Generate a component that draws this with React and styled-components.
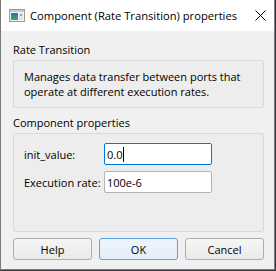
import React from 'react';
import styled, { createGlobalStyle } from 'styled-components';

const GlobalStyle = createGlobalStyle`
  html, body {
    margin: 0;
    padding: 0;
    background: #3b3a45;
  }
  body {
    font-family: "Open Sans", "Noto Sans", sans-serif;
    font-size: 11px;
    color: #000;
  }
`;

const Window = styled.div`
  width: 275px;
  height: 270px;
  box-sizing: border-box;
  display: flex;
  flex-direction: column;
  background: #f0f0f0;
  border: 1px solid #7a7a7a;
  border-top: none;
`;

const TitleBar = styled.div`
  height: 31px;
  flex: none;
  display: flex;
  align-items: center;
  background: #fff;
  padding-left: 8px;
`;

const Title = styled.span`
  margin-left: 5px;
  font-size: 11.2px;
  line-height: 15px;
  white-space: nowrap;
`;

const CloseIcon = styled.svg`
  margin-left: auto;
  margin-right: 8px;
  flex: none;
`;

const Body = styled.div`
  flex: 1;
  display: flex;
  flex-direction: column;
  padding: 11px 10px 9px 12px;
`;

const SectionLabel = styled.div`
  line-height: 15px;
  margin-top: ${p => p.$gap || 0}px;
`;

const GroupBox = styled.div`
  margin-top: 3px;
  border: 1px solid #d9d9d9;
  border-radius: 2px;
  background: #ededed;
  padding: ${p => p.$pad};
  ${p => p.$grow && 'flex: 1;'}
`;

const Description = styled.p`
  margin: 0;
  line-height: 15px;
`;

const Form = styled.div`
  display: grid;
  grid-template-columns: 80px 108px;
  row-gap: 6px;
  align-items: center;
`;

const FieldLabel = styled.label`
  line-height: 15px;
  white-space: nowrap;
`;

const Input = styled.div`
  height: 22px;
  box-sizing: border-box;
  display: flex;
  align-items: center;
  padding-left: 2px;
  background: #fff;
  border: 1px solid ${p => (p.$focused ? '#0078d7' : '#b4b4b4')};
  border-radius: 2px;
  white-space: nowrap;
`;

const Caret = styled.span`
  display: inline-block;
  width: 1px;
  height: 15px;
  margin-left: 1px;
  background: #000;
`;

const ButtonRow = styled.div`
  margin-top: 6px;
  display: grid;
  grid-template-columns: repeat(3, 1fr);
  column-gap: 7px;
`;

const Button = styled.button`
  height: 22px;
  padding: 0;
  font: inherit;
  color: #000;
  border-radius: 3px;
  border: 1px solid ${p => (p.$default ? '#5aa2e0' : '#adadad')};
  background: ${p =>
    p.$default
      ? 'linear-gradient(#edf4fb, #e3eef9)'
      : 'linear-gradient(#f6f6f6, #e9e9e9)'};
`;

function AppIcon() {
  return (
    <svg width="16" height="13" viewBox="0 0 16 13">
      <defs>
        <linearGradient id="pane" x1="0" y1="0" x2="0" y2="1">
          <stop offset="0" stopColor="#2f6fae" />
          <stop offset="1" stopColor="#3fa86a" />
        </linearGradient>
      </defs>
      <rect x="0.5" y="0.5" width="15" height="12" fill="#f4f4f4" stroke="#9a9a9a" />
      <rect x="1" y="1" width="14" height="2" fill="#c9c9c9" />
      <rect x="2" y="4" width="7" height="7" fill="url(#pane)" />
      <rect x="10" y="4" width="4" height="7" fill="#e4e4e4" />
      <rect x="11" y="5" width="2" height="2" fill="#7fb6a0" />
    </svg>
  );
}

export default function App() {
  return (
    <>
      <GlobalStyle />
      <Window>
        <TitleBar>
          <AppIcon />
          <Title>Component (Rate Transition) properties</Title>
          <CloseIcon width="11" height="11" viewBox="0 0 11 11">
            <path d="M0.5 0.5 L10.5 10.5 M10.5 0.5 L0.5 10.5" stroke="#000" strokeWidth="1" />
          </CloseIcon>
        </TitleBar>
        <Body>
          <SectionLabel>Rate Transition</SectionLabel>
          <GroupBox $pad="8px 10px 8px 10px">
            <Description>
              Manages data transfer between ports that
              <br />
              operate at different execution rates.
            </Description>
          </GroupBox>
          <SectionLabel $gap={7}>Component properties</SectionLabel>
          <GroupBox $grow $pad="9px 10px">
            <Form>
              <FieldLabel>init_value:</FieldLabel>
              <Input $focused>
                0.0<Caret />
              </Input>
              <FieldLabel>Execution rate:</FieldLabel>
              <Input>100e-6</Input>
            </Form>
          </GroupBox>
          <ButtonRow>
            <Button>Help</Button>
            <Button $default>OK</Button>
            <Button>Cancel</Button>
          </ButtonRow>
        </Body>
      </Window>
    </>
  );
}
